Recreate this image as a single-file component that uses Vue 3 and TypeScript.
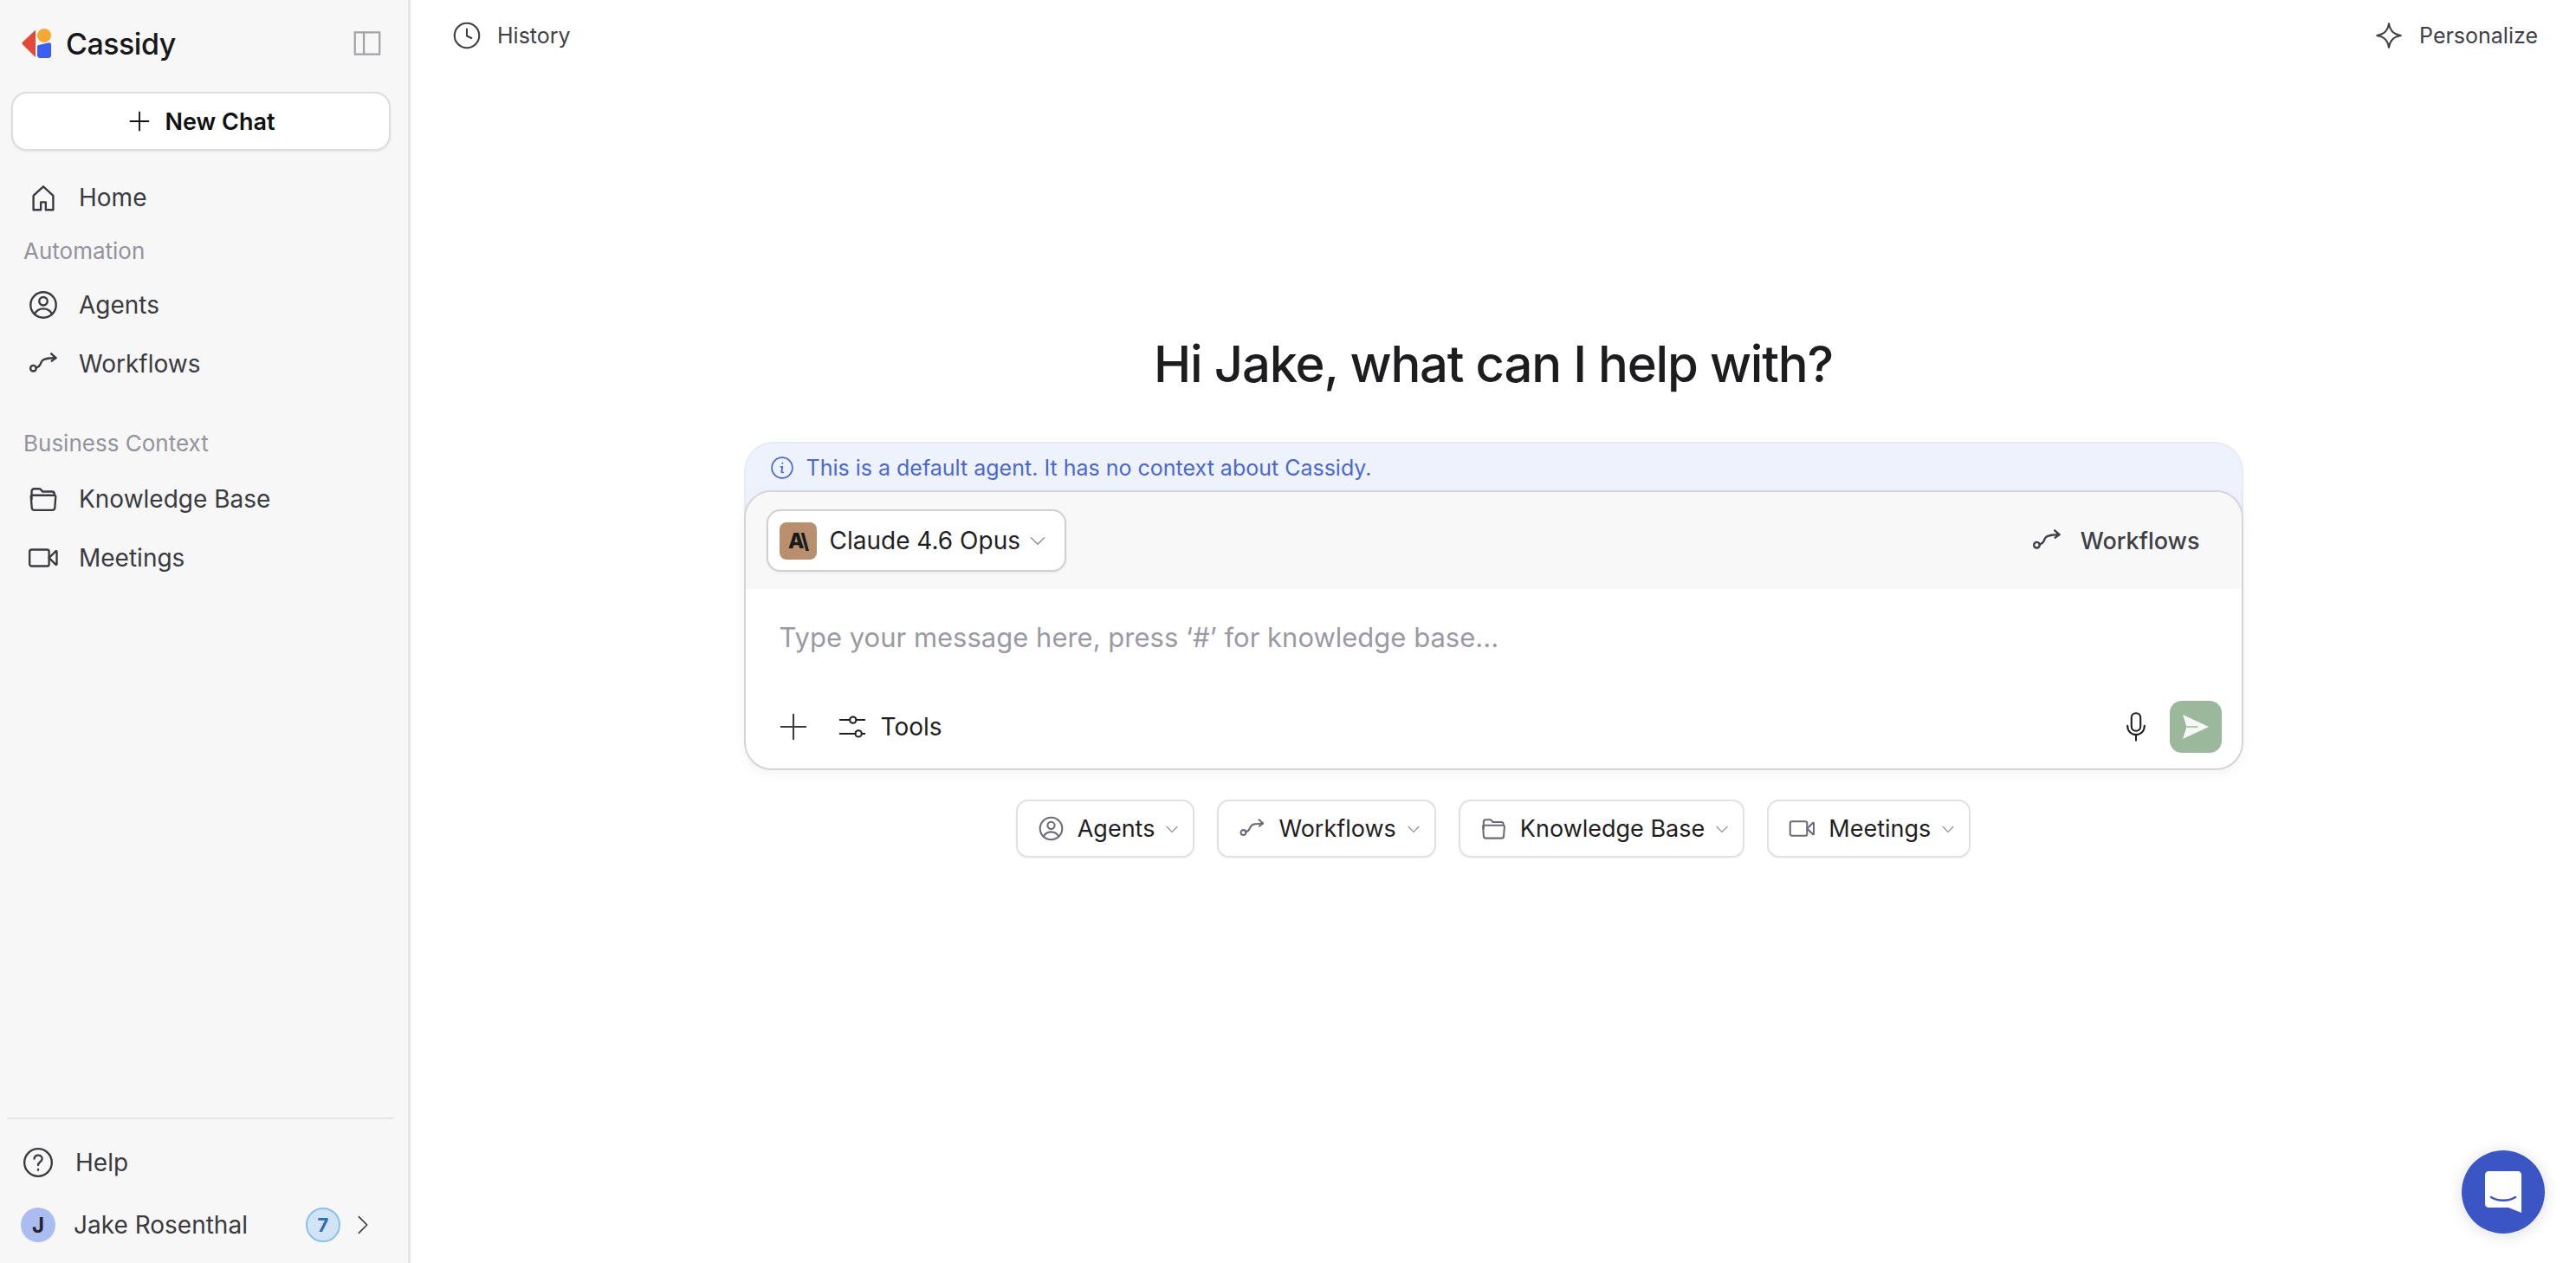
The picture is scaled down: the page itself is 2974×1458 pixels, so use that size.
<script setup lang="ts">
// Cassidy home screen: sidebar, top bar and the chat composer.

const icons: Record<string, string[]> = {
  home: ["M4.8 21V10.6L12 4l7.2 6.6V21h-5.4v-5.6h-3.6V21z"],
  agents: [
    "M12 2.7a9.3 9.3 0 1 0 0 18.6a9.3 9.3 0 1 0 0-18.6z",
    "M12 6.3a3 3 0 1 0 0 6a3 3 0 1 0 0-6z",
    "M5.6 18.8c1.3-2.8 3.6-4 6.4-4s5.100 1.200 6.400 4",
  ],
  workflows: [
    "M2.600 15.300a2.100 2.100 0 1 0 4.200 0a2.100 2.100 0 1 0-4.200 0z",
    "M6.800 14.800c3.400-.8 3-3.300 4.400-5.100c1.300-1.700 4.300-1.700 9.800-2",
    "M17.800 4.600l3.400 3l-3 2.300",
  ],
  folder: [
    "M3.500 12V6.500c0-1 .8-1.900 1.900-1.900h3.300c.9 0 1.500.4 2 1.100l.6.9h7c1.100 0 1.800.8 1.800 1.800",
    "M3.900 9.300h16.200c.6 0 1 .5 .9 1.100l-.6 8c-.1 1-.9 1.700-1.800 1.700H5.400c-.9 0-1.700-.7-1.800-1.700l-.6-8c-.1-.6 .3-1.100 .9-1.100z",
  ],
  video: [
    "M3.500 6h11.200c.9 0 1.500 .7 1.500 1.500v9c0 .8-.6 1.500-1.500 1.500H3.500C2.700 18 2 17.300 2 16.500v-9C2 6.700 2.700 6 3.500 6z",
    "M16.200 12l4.800-4.800c.3-.3 .8-.1 .8 .3v9c0 .4-.5 .6-.8 .3z",
  ],
  chevron: ["M5 9l7 7l7-7"],
  plus: ["M12 3v18", "M3 12h18"],
  clock: ["M12 2.500a9.500 9.500 0 1 0 0 19a9.500 9.500 0 1 0 0-19z", "M12 7v5.300l3.500 1.700"],
  star: ["M12 2.800c.9 5.400 3.300 8.100 9.200 9.200c-5.900 1.100-8.300 3.800-9.200 9.200c-.9-5.400-3.300-8.100-9.200-9.200c5.900-1.100 8.300-3.800 9.200-9.200z"],
  help: [
    "M12 2.500a9.500 9.500 0 1 0 0 19a9.500 9.500 0 1 0 0-19z",
    "M9.300 9.400c.2-1.500 1.300-2.400 2.800-2.400c1.600 0 2.700 1 2.700 2.400c0 2.100-2.800 2.200-2.800 4.400",
    "M12 16.700v.5",
  ],
  sliders: [
    "M3 7h7.200", "M14.800 7H21", "M3 17h11.200", "M19 17h2",
    "M10.200 7a2.300 2.300 0 1 0 4.600 0a2.300 2.300 0 1 0-4.600 0z",
    "M14.200 17a2.300 2.300 0 1 0 4.600 0a2.300 2.300 0 1 0-4.600 0z",
  ],
  mic: [
    "M12 2c2 0 3.300 1.400 3.300 3.300v6.400c0 1.900-1.300 3.300-3.300 3.300s-3.300-1.400-3.300-3.300V5.300C8.700 3.400 10 2 12 2z",
    "M5.800 11.200c0 3.900 2.600 6.500 6.200 6.500s6.200-2.600 6.200-6.500",
    "M12 17.700V22",
  ],
  info: [
    "M12 2.500a9.500 9.500 0 1 0 0 19a9.500 9.500 0 1 0 0-19z",
    "M12.300 7.600v.4",
    "M10.800 11h1.500l-.9 5.200h1.500",
  ],
  panel: ["M3 4h18v16H3z", "M9.500 4v16"],
  right: ["M8 4l8 8l-8 8"],
};

const automation = [
  { label: "Agents", icon: "agents" },
  { label: "Workflows", icon: "workflows" },
];
const context = [
  { label: "Knowledge Base", icon: "folder" },
  { label: "Meetings", icon: "video" },
];
const chips = [...automation, ...context];
</script>

<template>
  <div class="app">
    <aside class="sidebar">
      <div class="brand">
        <svg class="logo" viewBox="0 0 36 34">
          <path d="M16 1.500V33L1.200 18.500c-.9-.9-.9-2.100 0-3z" fill="#e24a37" />
          <circle cx="26" cy="8" r="8" fill="#f3a933" />
          <path d="M18 21c0-1 .6-1.700 1.500-2l12-2.700c1.300-.3 2.500 .6 2.500 1.900V31c0 1.600-1.300 3-3 3H21c-1.700 0-3-1.400-3-3z" fill="#3b5ff2" />
        </svg>
        <span class="brand-name">Cassidy</span>
        <svg class="panel-icon" viewBox="0 0 24 24"><path v-for="d in icons.panel" :key="d" :d="d" /></svg>
      </div>

      <button class="new-chat">
        <svg class="new-plus" viewBox="0 0 24 24"><path v-for="d in icons.plus" :key="d" :d="d" /></svg>
        New Chat
      </button>

      <nav class="nav">
        <a class="nav-item">
          <svg class="nav-icon" viewBox="0 0 24 24"><path v-for="d in icons.home" :key="d" :d="d" /></svg>
          Home
        </a>
        <div class="nav-title first">Automation</div>
        <a v-for="item in automation" :key="item.label" class="nav-item">
          <svg class="nav-icon" viewBox="0 0 24 24"><path v-for="d in icons[item.icon]" :key="d" :d="d" /></svg>
          {{ item.label }}
        </a>
        <div class="nav-title">Business Context</div>
        <a v-for="item in context" :key="item.label" class="nav-item">
          <svg class="nav-icon" viewBox="0 0 24 24"><path v-for="d in icons[item.icon]" :key="d" :d="d" /></svg>
          {{ item.label }}
        </a>
      </nav>

      <div class="side-foot">
        <a class="foot-row help">
          <svg class="help-icon" viewBox="0 0 24 24"><path v-for="d in icons.help" :key="d" :d="d" /></svg>
          Help
        </a>
        <a class="foot-row user">
          <span class="avatar">J</span>
          <span class="user-name">Jake Rosenthal</span>
          <span class="count">7</span>
          <svg class="user-chevron" viewBox="0 0 24 24"><path v-for="d in icons.right" :key="d" :d="d" /></svg>
        </a>
      </div>
    </aside>

    <main class="main">
      <header class="topbar">
        <a class="top-link">
          <svg class="top-icon" viewBox="0 0 24 24"><path v-for="d in icons.clock" :key="d" :d="d" /></svg>
          History
        </a>
        <a class="top-link personalize">
          <svg class="top-icon" viewBox="0 0 24 24"><path v-for="d in icons.star" :key="d" :d="d" /></svg>
          Personalize
        </a>
      </header>

      <section class="hero">
        <h1>Hi Jake, what can I help with?</h1>

        <div class="composer">
          <div class="banner">
            <svg class="info-icon" viewBox="0 0 24 24"><path v-for="d in icons.info" :key="d" :d="d" /></svg>
            This is a default agent. It has no context about Cassidy.
          </div>
          <div class="card">
            <div class="card-head">
              <button class="model">
                <span class="model-logo">A\</span>
                <span class="model-name">Claude 4.6 Opus</span>
                <svg class="model-chevron" viewBox="0 0 24 24"><path v-for="d in icons.chevron" :key="d" :d="d" /></svg>
              </button>
              <a class="head-link">
                <svg class="head-icon" viewBox="0 0 24 24"><path v-for="d in icons.workflows" :key="d" :d="d" /></svg>
                Workflows
              </a>
            </div>
            <div class="placeholder">Type your message here, press ‘#’ for knowledge base...</div>
            <div class="card-foot">
              <svg class="foot-plus" viewBox="0 0 24 24"><path v-for="d in icons.plus" :key="d" :d="d" /></svg>
              <a class="tools">
                <svg class="tools-icon" viewBox="0 0 24 24"><path v-for="d in icons.sliders" :key="d" :d="d" /></svg>
                Tools
              </a>
              <svg class="mic" viewBox="0 0 24 24"><path v-for="d in icons.mic" :key="d" :d="d" /></svg>
              <button class="send">
                <svg viewBox="0 0 30 28" width="30" height="28">
                  <path d="M0 0l30 14L0 28l4.500-14z" fill="#f6f8f5" />
                  <path d="M5 14h12" stroke="#9cb89c" stroke-width="1.500" fill="none" />
                </svg>
              </button>
            </div>
          </div>
        </div>

        <div class="chips">
          <button v-for="chip in chips" :key="chip.label" class="chip">
            <svg class="chip-icon" viewBox="0 0 24 24"><path v-for="d in icons[chip.icon]" :key="d" :d="d" /></svg>
            <span class="chip-label">{{ chip.label }}</span>
            <svg class="chip-chevron" viewBox="0 0 24 24"><path v-for="d in icons.chevron" :key="d" :d="d" /></svg>
          </button>
        </div>
      </section>
    </main>

    <button class="messenger">
      <svg viewBox="0 0 42 48" width="42" height="48">
        <path d="M4 0h34c2.200 0 4 1.800 4 4v44l-15-6H4c-2.200 0-4-1.800-4-4V4c0-2.200 1.800-4 4-4z" fill="#fff" />
        <path d="M7 30c8 5 20 5 28 0" stroke="#3a55c4" stroke-width="2.500" stroke-linecap="round" fill="none" />
      </svg>
    </button>
  </div>
</template>

<style scoped>
.app {
  display: flex;
  height: 1458px;
  background: #fff;
  color: #1f1f23;
  font-family: Inter, "Liberation Sans", sans-serif;
  overflow: hidden;
}
svg {
  fill: none;
  stroke: currentColor;
  stroke-width: 1.5;
  stroke-linecap: round;
  stroke-linejoin: round;
  flex: none;
  display: block;
}
button {
  font-family: inherit;
  cursor: pointer;
}

/* sidebar */
.sidebar {
  width: 474px;
  flex: none;
  box-sizing: border-box;
  background: #f7f7f7;
  border-right: 3px solid #e6e6e6;
  display: flex;
  flex-direction: column;
}
.brand {
  display: flex;
  align-items: center;
  height: 100px;
  padding: 0 28px 0 25px;
}
.logo {
  width: 36px;
  height: 34px;
  stroke: none;
}
.brand-name {
  margin-left: 15px;
  font-size: 34px;
  font-weight: 500;
  letter-spacing: -0.5px;
  color: #18181b;
}
.panel-icon {
  width: 38px;
  height: 38px;
  margin-left: auto;
  color: #a1a1a8;
  stroke-width: 1.4;
  stroke-linejoin: miter;
}
.new-chat {
  margin: 6px 0 0 13px;
  width: 438px;
  height: 68px;
  display: flex;
  align-items: center;
  justify-content: center;
  gap: 16px;
  background: #fff;
  border: 2px solid #dedede;
  border-radius: 18px;
  box-shadow: 0 1px 3px rgba(0, 0, 0, 0.08);
  font-size: 27px;
  font-weight: 600;
  color: #111;
}
.new-plus {
  width: 28px;
  height: 28px;
  stroke-width: 1.6;
}
.nav {
  display: flex;
  flex-direction: column;
  margin-top: 20px;
}
.nav-item {
  height: 68px;
  display: flex;
  align-items: center;
  gap: 22px;
  padding-left: 31px;
  font-size: 28px;
  color: #3a3a41;
}
.nav-icon {
  width: 38px;
  height: 38px;
  color: #3a3a41;
}
.nav-title {
  margin-top: 24px;
  padding-left: 27px;
  height: 40px;
  line-height: 40px;
  font-size: 26px;
  color: #93939c;
}
.nav-title.first {
  margin-top: 8px;
  margin-bottom: 8px;
}
.nav-title:not(.first) {
  margin-top: 38px;
  margin-bottom: 10px;
}
.side-foot {
  margin: auto 16px 0 8px;
  border-top: 2px solid #e5e5e5;
  padding-bottom: 8px;
}
.foot-row {
  display: flex;
  align-items: center;
  font-size: 28px;
  color: #3a3a41;
}
.help {
  height: 72px;
  margin-top: 14px;
  padding-left: 18px;
  gap: 20px;
}
.help-icon {
  width: 40px;
  height: 40px;
  margin-left: -2px;
  margin-right: 3px;
  stroke-width: 1.4;
}
.user {
  height: 72px;
  padding-left: 16px;
}
.avatar {
  width: 40px;
  height: 40px;
  border-radius: 50%;
  background: #abbcf0;
  color: #24242a;
  font-size: 24px;
  font-weight: 700;
  display: flex;
  align-items: center;
  justify-content: center;
}
.user-name {
  margin-left: 21px;
}
.count {
  margin-left: auto;
  width: 40px;
  height: 40px;
  box-sizing: border-box;
  border-radius: 50%;
  background: #cfe4f4;
  border: 2px solid #8cc0ee;
  color: #2f6cb0;
  font-size: 22px;
  font-weight: 700;
  display: flex;
  align-items: center;
  justify-content: center;
}
.user-chevron {
  width: 28px;
  height: 28px;
  margin: 0 22px 0 12px;
  stroke-width: 1.4;
}

/* main column */
.main {
  flex: 1;
  min-width: 0;
  display: flex;
  flex-direction: column;
}
.topbar {
  height: 82px;
  display: flex;
  align-items: center;
  justify-content: space-between;
  padding: 0 44px 0 47px;
}
.top-link {
  display: flex;
  align-items: center;
  gap: 17px;
  font-size: 25px;
  color: #3f3f46;
}
.top-icon {
  width: 36px;
  height: 36px;
  stroke-width: 1.4;
}
.personalize {
  font-size: 25px;
}
.hero {
  display: flex;
  flex-direction: column;
  align-items: center;
  padding-top: 303px;
}
h1 {
  margin: 0;
  height: 70px;
  line-height: 70px;
  font-size: 58px;
  font-weight: 500;
  letter-spacing: -1.2px;
  color: #1d1d20;
}
.composer {
  width: 1731px;
  margin-top: 55px;
}
.banner {
  height: 88px;
  box-sizing: border-box;
  padding: 11px 0 0 27px;
  display: flex;
  align-items: flex-start;
  gap: 13px;
  background: #eef2fd;
  border: 2px solid #e6ebf9;
  border-bottom: none;
  border-radius: 34px 34px 0 0;
  font-size: 25px;
  line-height: 34px;
  color: #4a68cf;
}
.info-icon {
  width: 30px;
  height: 30px;
  margin-top: 2px;
  stroke-width: 1.4;
}
.card {
  position: relative;
  margin-top: -32px;
  height: 323px;
  box-sizing: border-box;
  background: #fff;
  border: 2px solid #d4d4d9;
  border-radius: 32px;
  box-shadow: 0 4px 14px rgba(0, 0, 0, 0.05);
  overflow: hidden;
  display: flex;
  flex-direction: column;
}
.card-head {
  height: 112px;
  flex: none;
  background: #f8f8f8;
  display: flex;
  align-items: center;
  justify-content: space-between;
  padding: 0 48px 0 24px;
}
.model {
  height: 72px;
  width: 346px;
  box-sizing: border-box;
  display: flex;
  align-items: center;
  padding: 0 0 0 13px;
  background: #fff;
  border: 2px solid #cfcfd4;
  border-radius: 16px;
  box-shadow: 0 1px 3px rgba(0, 0, 0, 0.08);
}
.model-logo {
  width: 43px;
  height: 43px;
  border-radius: 8px;
  background: #b9906f;
  color: #1b1b1b;
  font-size: 24px;
  font-weight: 800;
  letter-spacing: -2px;
  line-height: 43px;
  text-align: center;
}
.model-name {
  margin-left: 15px;
  font-size: 28px;
  color: #1f1f23;
}
.model-chevron {
  width: 26px;
  height: 26px;
  margin-left: auto;
  margin-right: 18px;
  color: #8f8f98;
  stroke-width: 1.3;
}
.head-link {
  display: flex;
  align-items: center;
  gap: 20px;
  font-size: 27px;
  font-weight: 500;
  color: #3f3f46;
}
.head-icon {
  width: 38px;
  height: 38px;
}
.placeholder {
  margin: 34px 0 0 39px;
  height: 44px;
  line-height: 44px;
  font-size: 31px;
  color: #9a9aa3;
}
.card-foot {
  margin-top: auto;
  height: 60px;
  margin-bottom: 18px;
  display: flex;
  align-items: center;
  padding: 0 23px 0 36px;
}
.foot-plus {
  width: 38px;
  height: 38px;
  color: #3a3a41;
  stroke-width: 1.3;
}
.tools {
  margin-left: 30px;
  display: flex;
  align-items: center;
  gap: 14px;
  font-size: 28px;
  color: #1f1f23;
}
.tools-icon {
  width: 38px;
  height: 38px;
  stroke-width: 1.3;
}
.mic {
  width: 38px;
  height: 38px;
  margin-left: auto;
  margin-right: 20px;
  color: #1f1f23;
  stroke-width: 1.3;
}
.send {
  width: 60px;
  height: 60px;
  padding: 0;
  background: #9cb89c;
  border: none;
  border-radius: 14px;
  display: flex;
  align-items: center;
  justify-content: center;
}
.send svg {
  stroke: none;
  fill: none;
}
.chips {
  display: flex;
  gap: 26px;
  margin-top: 34px;
}
.chip {
  height: 67px;
  display: flex;
  align-items: center;
  padding: 0 14px 0 22px;
  background: #fff;
  border: 2px solid #e1e1e3;
  border-radius: 14px;
  box-shadow: 0 1px 2px rgba(0, 0, 0, 0.05);
  color: #1f1f23;
}
.chip-icon {
  width: 33px;
  height: 33px;
  color: #6b6b75;
  stroke-width: 1.5;
}
.chip-label {
  margin-left: 14px;
  font-size: 27px;
}
.chip-chevron {
  width: 20px;
  height: 20px;
  margin-left: 10px;
  color: #8f8f98;
  stroke-width: 1.5;
}

/* floating messenger launcher, sits over the page */
.messenger {
  position: fixed;
  right: 36px;
  bottom: 34px;
  width: 96px;
  height: 96px;
  padding: 0;
  border: none;
  border-radius: 50%;
  background: #3a55c4;
  box-shadow: 0 2px 18px rgba(0, 0, 0, 0.14);
  display: flex;
  align-items: center;
  justify-content: center;
}
.messenger svg {
  stroke: none;
  fill: none;
}
</style>

<style>
html, body {
  margin: 0;
  background: #fff;
}
</style>
